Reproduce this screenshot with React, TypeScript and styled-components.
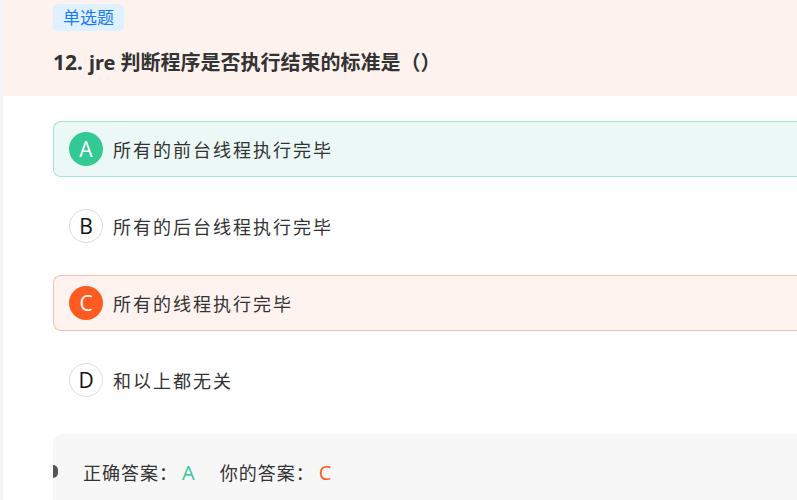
import styled, { createGlobalStyle } from "styled-components";

const GlobalStyle=createGlobalStyle`
    body{
        margin:0;
        background:#f5f5f5;
        font-family:"Noto Sans","Noto Sans CJK SC",sans-serif;
        color:#333;
        overflow:hidden;
    }
`;

const Page=styled.div`
    margin-left:3px;
    width:900px;
    height:500px;
    background:#fff;
`;
const Header=styled.header`
    background:#fdf2ee;
    height:96px;
    padding:4px 0 0 50px;
    box-sizing:border-box;
`;
const Tag=styled.span`
    display:inline-block;
    background:#dff0ff;
    color:#1a7cf4;
    font-size:17px;
    line-height:27px;
    padding:0 10px;
    border-radius:5px;
`;
const Title=styled.h1`
    margin:17px 0 0;
    font-size:20px;
    line-height:28px;
    font-weight:700;
    color:#333;
    display:flex;
    align-items:baseline;
    gap:6px;
    span.num{
        font-size:21px;
    }
`;
const Options=styled.ul`
    list-style:none;
    margin:0;
    padding:25px 0 0 50px;
    display:flex;
    flex-direction:column;
    gap:21px;
`;
const Option=styled.li<{ $state?: "right" | "wrong" }>`
    height:56px;
    box-sizing:border-box;
    display:flex;
    align-items:center;
    gap:10px;
    padding-left:15px;
    border-radius:8px 0 0 8px;
    border:1px solid ${p=>p.$state==="right"?"#a6e2cc":p.$state==="wrong"?"#f7c0ae":"transparent"};
    border-right:none;
    background:${p=>p.$state==="right"?"#ecf8f5":p.$state==="wrong"?"#fff3f0":"transparent"};
    font-size:18px;
    letter-spacing:2px;
`;
const Letter=styled.span<{ $state?: "right" | "wrong" }>`
    width:34px;
    height:34px;
    border-radius:50%;
    box-sizing:border-box;
    display:flex;
    align-items:center;
    justify-content:center;
    font-size:21px;
    letter-spacing:0;
    font-family:"Open Sans","Noto Sans",sans-serif;
    background:${p=>p.$state==="right"?"#32c995":p.$state==="wrong"?"#ff5a1f":"#fff"};
    color:${p=>p.$state?"#fff":"#111"};
    border:${p=>p.$state?"none":"1px solid #ddd"};
`;
const Answer=styled.div`
    margin:26px 0 0 50px;
    background:#f7f7f7;
    border-radius:10px 0 0 0;
    height:76px;
    display:flex;
    align-items:center;
    position:relative;
    font-size:18px;
    padding-left:30px;
    gap:24px;
`;
const Marker=styled.span`
    position:absolute;
    left:0;
    top:31px;
    width:5px;
    height:13px;
    background:#555;
    border-radius:0 5px 5px 0;
`;
const AnswerItem=styled.span<{ $color: string }>`
    letter-spacing:1px;
    b{
        font-weight:400;
        font-size:20px;
        color:${p=>p.$color};
        margin-left:4px;
        font-family:"Open Sans","Noto Sans",sans-serif;
    }
`;

type State="right"|"wrong"|undefined;
const options:{ key: string; text: string; state: State }[]=[
    { key:"A", text:"所有的前台线程执行完毕", state:"right" },
    { key:"B", text:"所有的后台线程执行完毕", state:undefined },
    { key:"C", text:"所有的线程执行完毕", state:"wrong" },
    { key:"D", text:"和以上都无关", state:undefined },
];

function App(){
    return <>
        <GlobalStyle/>
        <Page>
            <Header>
                <Tag>单选题</Tag>
                <Title><span className="num">12.</span>jre 判断程序是否执行结束的标准是（）</Title>
            </Header>
            <Options>
                {options.map(o=><Option key={o.key} $state={o.state}>
                    <Letter $state={o.state}>{o.key}</Letter>
                    {o.text}
                </Option>)}
            </Options>
            <Answer>
                <Marker/>
                <AnswerItem $color="#32c995">正确答案：<b>A</b></AnswerItem>
                <AnswerItem $color="#ff5a1f">你的答案：<b>C</b></AnswerItem>
            </Answer>
        </Page>
    </>
}

export default App;
